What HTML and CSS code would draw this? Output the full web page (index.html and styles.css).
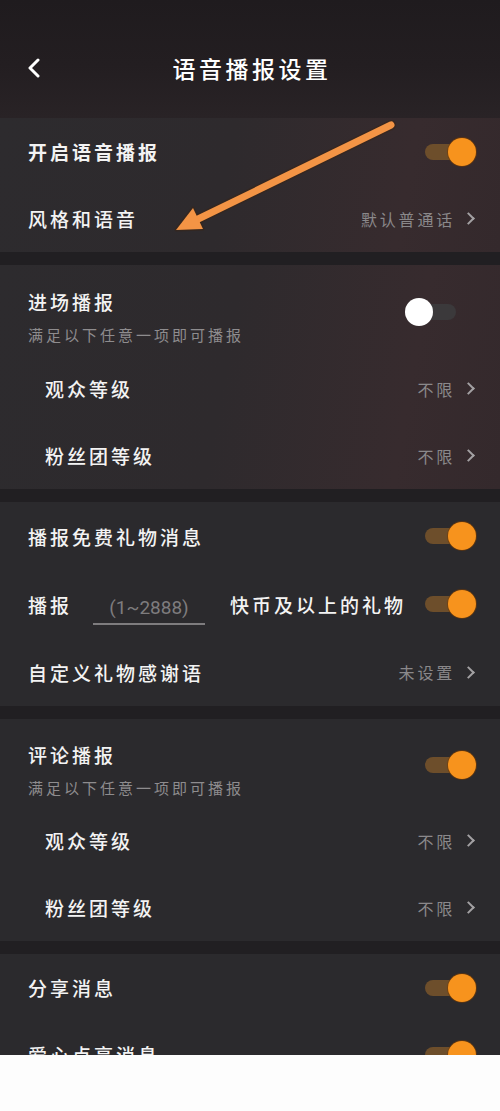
FILE: index.html
```html
<!DOCTYPE html>
<html lang="zh-CN">
<head>
<meta charset="utf-8">
<title>语音播报设置</title>
<link rel="stylesheet" href="styles.css">
</head>
<body>
<div class="screen">
  <div class="app">
    <header class="topbar">
      <svg class="back" viewBox="0 0 14 20" width="14" height="20"><path d="M11 2 L3 10 L11 18" fill="none" stroke="#ffffff" stroke-width="3" stroke-linecap="round" stroke-linejoin="round"/></svg>
      <h1 class="title">语音播报设置</h1>
    </header>

    <section class="group warm">
      <div class="row">
        <span class="label strong">开启语音播报</span>
        <span class="switch on"><span class="track"></span><span class="knob"></span></span>
      </div>
      <div class="row">
        <span class="label">风格和语音</span>
        <span class="value">默认普通话<i class="chev"></i></span>
      </div>
    </section>

    <section class="group warm">
      <div class="head">
        <div class="head-text">
          <span class="label">进场播报</span>
          <span class="sub">满足以下任意一项即可播报</span>
        </div>
        <span class="switch off"><span class="track"></span><span class="knob"></span></span>
      </div>
      <div class="row indent">
        <span class="label">观众等级</span>
        <span class="value">不限<i class="chev"></i></span>
      </div>
      <div class="row indent">
        <span class="label">粉丝团等级</span>
        <span class="value">不限<i class="chev"></i></span>
      </div>
    </section>

    <section class="group">
      <div class="row tall">
        <span class="label">播报免费礼物消息</span>
        <span class="switch on"><span class="track"></span><span class="knob"></span></span>
      </div>
      <div class="row tall">
        <div class="gift">
          <span class="label">播报</span>
          <span class="input">(1~2888)</span>
          <span class="label">快币及以上的礼物</span>
        </div>
        <span class="switch on"><span class="track"></span><span class="knob"></span></span>
      </div>
      <div class="row tall">
        <span class="label">自定义礼物感谢语</span>
        <span class="value">未设置<i class="chev"></i></span>
      </div>
    </section>

    <section class="group">
      <div class="head short">
        <div class="head-text">
          <span class="label">评论播报</span>
          <span class="sub">满足以下任意一项即可播报</span>
        </div>
        <span class="switch on"><span class="track"></span><span class="knob"></span></span>
      </div>
      <div class="row indent">
        <span class="label">观众等级</span>
        <span class="value">不限<i class="chev"></i></span>
      </div>
      <div class="row indent">
        <span class="label">粉丝团等级</span>
        <span class="value">不限<i class="chev"></i></span>
      </div>
    </section>

    <section class="group">
      <div class="row">
        <span class="label">分享消息</span>
        <span class="switch on"><span class="track"></span><span class="knob"></span></span>
      </div>
      <div class="row">
        <span class="label">爱心点亮消息</span>
        <span class="switch on"><span class="track"></span><span class="knob"></span></span>
      </div>
    </section>

    <svg class="arrow" viewBox="0 0 500 1055" width="500" height="1055">
      <line x1="391" y1="125" x2="194" y2="221" stroke="#3a2414" stroke-opacity="0.5" stroke-width="10" stroke-linecap="round"/>
      <polygon points="176,230 193,208 203,229" fill="#3a2414" fill-opacity="0.5" stroke="#3a2414" stroke-opacity="0.5" stroke-width="3" stroke-linejoin="round"/>
      <line x1="391" y1="125" x2="194" y2="221" stroke="#f39445" stroke-width="7" stroke-linecap="round"/>
      <polygon points="176,230 193,208 203,229" fill="#f39445"/>
    </svg>
  </div>
</div>
</body>
</html>
```

FILE: styles.css
```css
* {
  box-sizing: border-box;
  margin: 0;
  padding: 0;
}

html, body {
  width: 500px;
  height: 1111px;
  background: #fdfdfd;
  overflow: hidden;
}

body {
  font-family: "Noto Sans CJK SC", "Noto Sans", sans-serif;
  color: #f2f2f2;
}

.screen {
  width: 500px;
  height: 1111px;
  background: #fdfdfd;
}

.app {
  position: relative;
  width: 500px;
  height: 1055px;
  overflow: hidden;
  background: #211f22;
  display: flex;
  flex-direction: column;
  gap: 13px;
}

.app > * {
  flex-shrink: 0;
}

.topbar {
  height: 118px;
  margin-bottom: -13px;
  display: flex;
  align-items: center;
  justify-content: center;
  position: relative;
  background: linear-gradient(180deg, #1f1b1e 0%, #231e21 55%, #292326 100%);
}

.back {
  position: absolute;
  left: 27px;
  top: 58px;
}

.title {
  font-size: 23px;
  font-weight: 500;
  letter-spacing: 3.5px;
  color: #ffffff;
  margin-top: 18px;
  padding-left: 4px;
}

.group {
  background: #2b2a2d;
  display: flex;
  flex-direction: column;
}

.group.warm {
  background: linear-gradient(100deg, #2d2b2e 0%, #2e2a2d 45%, #372b2e 80%, #34292c 100%);
}

.row {
  height: 67px;
  padding: 0 24px 0 28px;
  display: flex;
  align-items: center;
  justify-content: space-between;
}

.row.tall {
  height: 68px;
}

.row.indent {
  padding-left: 45px;
}

.head {
  height: 90px;
  padding: 0 24px 0 28px;
  display: flex;
  align-items: center;
  justify-content: space-between;
}

.head.short {
  height: 88px;
}

.head-text {
  display: flex;
  flex-direction: column;
  gap: 9px;
  padding-top: 12px;
}

.head .switch {
  margin-top: 4px;
}

.label {
  font-size: 19px;
  font-weight: 500;
  letter-spacing: 3px;
  color: #f3f3f3;
  white-space: nowrap;
}

.label.strong {
  font-weight: 700;
}

.sub {
  font-size: 15px;
  letter-spacing: 3px;
  color: #8e8c8e;
  white-space: nowrap;
}

.value {
  display: flex;
  align-items: center;
  font-size: 16px;
  letter-spacing: 2.8px;
  color: #8a888a;
  white-space: nowrap;
}

.chev {
  display: inline-block;
  width: 9px;
  height: 9px;
  border-top: 2px solid #a3a1a3;
  border-right: 2px solid #a3a1a3;
  transform: rotate(45deg);
  margin-left: 9px;
  margin-right: 3px;
}

.gift {
  display: flex;
  align-items: center;
}

.input {
  width: 112px;
  margin-left: 21px;
  margin-right: 25px;
  padding-bottom: 4px;
  border-bottom: 2px solid #7e7c7e;
  text-align: center;
  font-family: Roboto, "Noto Sans", sans-serif;
  font-size: 19px;
  color: #7e7c7e;
  transform: translateY(6px);
}

.switch {
  position: relative;
  width: 61px;
  height: 28px;
  flex: none;
}

.switch .track {
  position: absolute;
  left: 10px;
  right: 10px;
  top: 6px;
  height: 16px;
  border-radius: 8px;
  background: #6d4e2b;
}

.switch .knob {
  position: absolute;
  top: 0;
  width: 28px;
  height: 28px;
  border-radius: 50%;
  background: #f7931d;
  box-shadow: 0 0 0 1px rgba(120, 60, 0, 0.6);
}

.switch.on .knob {
  right: 0;
}

.switch.off {
  margin-right: 10px;
}

.switch.off .track {
  background: #3b393b;
}

.switch.off .knob {
  left: 0;
  background: #ffffff;
  box-shadow: none;
}

.arrow {
  position: absolute;
  left: 0;
  top: 0;
  pointer-events: none;
}
```
